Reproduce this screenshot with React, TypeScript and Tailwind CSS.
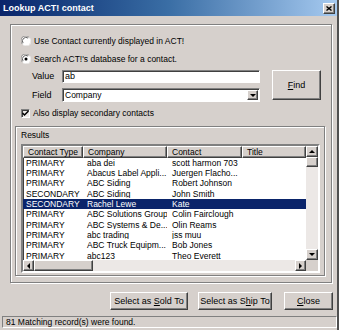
import React from "react";

const BG = "bg-[#d6d0cc]";
const raised =
  "border border-t-white border-l-white border-r-[#404040] border-b-[#404040] shadow-[inset_-1px_-1px_0_#808080] bg-[#d6d0cc]";
const sunken =
  "border border-t-[#808080] border-l-[#808080] border-r-white border-b-white shadow-[inset_1px_1px_0_#404040]";
const etched =
  "border border-[#808080] shadow-[inset_1px_1px_0_#fff,1px_1px_0_#fff]";

const rows: [string, string, string][] = [
  ["PRIMARY", "aba dei", "scott harmon 703"],
  ["PRIMARY", "Abacus Label Appli...", "Juergen Flacho..."],
  ["PRIMARY", "ABC Siding", "Robert Johnson"],
  ["SECONDARY", "ABC Siding", "John Smith"],
  ["SECONDARY", "Rachel Lewe", "Kate"],
  ["PRIMARY", "ABC Solutions Group", "Colin Fairclough"],
  ["PRIMARY", "ABC Systems & De...", "Olin Reams"],
  ["PRIMARY", "abc trading", "jss muu"],
  ["PRIMARY", "ABC Truck Equipm...", "Bob  Jones"],
  ["PRIMARY", "abc123", "Theo Everett"],
];

function Radio({ checked }: { checked?: boolean }) {
  return (
    <svg width="10" height="10" viewBox="0 0 12 12" className="shrink-0">
      <circle cx="6" cy="6" r="5.5" fill="#fff" />
      <path d="M1.5 9.5 A5.5 5.5 0 0 1 9.5 1.5" stroke="#808080" strokeWidth="1" fill="none" />
      <path d="M2.5 8.5 A4.3 4.3 0 0 1 8.5 2.5" stroke="#404040" strokeWidth="1" fill="none" />
      <path d="M10.5 2.5 A5.5 5.5 0 0 1 2.5 10.5" stroke="#f0f0f0" strokeWidth="1" fill="none" />
      {checked && <circle cx="6" cy="6" r="1.8" fill="#000" />}
    </svg>
  );
}

function Arrow({ dir }: { dir: "up" | "down" | "left" | "right" }) {
  const pts = {
    up: "1,5 7,5 4,2",
    down: "1,2 7,2 4,5",
    left: "5,1 5,7 2,4",
    right: "2,1 2,7 5,4",
  }[dir];
  const vert = dir === "up" || dir === "down";
  return (
    <svg width={vert ? 8 : 7} height={vert ? 7 : 8} viewBox={vert ? "0 0 8 7" : "0 0 7 8"}>
      <polygon points={pts} fill="#000" />
    </svg>
  );
}

function ScrollBtn({ dir, className }: { dir: "up" | "down" | "left" | "right"; className: string }) {
  return (
    <div className={`${raised} ${className} flex items-center justify-center shrink-0`}>
      <Arrow dir={dir} />
    </div>
  );
}

export default function App() {
  return (
    <div
      className={`w-[339px] h-[330px] ${BG} overflow-hidden flex flex-col border-r-2 border-r-[#505050] text-[8.5px] leading-none text-black`}
      style={{ fontFamily: '"Liberation Sans", Arial, sans-serif' }}
    >
      {/* Title bar */}
      <div className="h-[16px] shrink-0 flex items-center justify-between bg-gradient-to-r from-[#0a246a] via-[#3a6ea5] to-[#a6caf0]">
        <span className="pl-[3px] text-white font-bold text-[9px]">Lookup ACT! contact</span>
        <div className={`${raised} w-[12px] h-[11px] mr-[2px] flex items-center justify-center`}>
          <svg width="6" height="5" viewBox="0 0 6 5">
            <path d="M0.5 0.5 L5.5 4.5 M5.5 0.5 L0.5 4.5" stroke="#000" strokeWidth="1.4" />
          </svg>
        </div>
      </div>

      {/* Outer group */}
      <div className={`ml-[10px] mt-[8px] w-[322px] h-[259px] shrink-0 ${etched} flex flex-col`}>
        <div className="mt-[9px] h-[14px] flex items-center pl-[10px] gap-[3px]">
          <Radio />
          <span>Use Contact currently displayed in ACT!</span>
        </div>
        <div className="mt-[4px] h-[14px] flex items-center pl-[10px] gap-[3px]">
          <Radio checked />
          <span>Search ACT!'s database for a contact.</span>
        </div>

        <div className="mt-[4px] flex">
          <div className="flex flex-col pl-[21px]">
            <div className="h-[13px] flex items-center">
              <span className="w-[30px] text-[9px]">Value</span>
              <div className={`${sunken} bg-white w-[198px] h-[13px] flex items-center pl-[2px] text-[9px]`}>ab</div>
            </div>
            <div className="mt-[5px] h-[14px] flex items-center">
              <span className="w-[30px] text-[9px]">Field</span>
              <div className={`${sunken} bg-white w-[198px] h-[14px] flex items-center justify-between pl-[2px] pr-[1px]`}>
                <span className="text-[8.5px]">Company</span>
                <ScrollBtn dir="down" className="w-[11px] h-[10px]" />
              </div>
            </div>
          </div>
          <div className={`${raised} ml-[12px] w-[49px] h-[30px] flex items-center justify-center text-[9px]`}>
            <span>
              <span className="underline">F</span>ind
            </span>
          </div>
        </div>

        <div className="mt-[5px] h-[12px] flex items-center pl-[10px] gap-[3px]">
          <div className={`${sunken} bg-[#eeeae8] w-[9px] h-[9px] flex items-center justify-center`}>
            <svg width="7" height="7" viewBox="0 0 7 7">
              <path d="M0.5 3 L2.5 5 L6.5 1" stroke="#000" strokeWidth="1.5" fill="none" />
            </svg>
          </div>
          <span>Also display secondary contacts</span>
        </div>

        {/* Results frame */}
        <div className={`mt-[7px] ml-[4px] w-[310px] h-[150px] ${etched} flex flex-col`}>
          <div className="mt-[3px] h-[10px] pl-[5px] flex items-center">Results</div>
          {/* List view */}
          <div className="mt-[4px] ml-[5px] w-[299px] h-[129px] border-2 border-t-[#808080] border-l-[#808080] border-r-white border-b-white shadow-[inset_1px_1px_0_#404040] bg-white flex flex-col">
            <div className="flex h-[114px]">
              <div className="w-[283px] flex flex-col overflow-hidden">
                <div className="flex h-[12px] shrink-0">
                  {[
                    ["Contact Type", "w-[60px]"],
                    ["Company", "w-[84px]"],
                    ["Contact", "w-[75px]"],
                    ["Title", "w-[64px]"],
                  ].map(([t, w]) => (
                    <div key={t} className={`${raised} ${w} h-[12px] flex items-center pl-[4px] overflow-hidden whitespace-nowrap`}>
                      {t}
                    </div>
                  ))}
                </div>
                <div className="flex flex-col">
                  {rows.map((r, i) => {
                    const sel = i === 4;
                    return (
                      <div
                        key={i}
                        className={`flex h-[10.3px] shrink-0 items-center whitespace-nowrap ${sel ? "bg-[#0a246a] text-white" : ""}`}
                      >
                        <span className="w-[60px] pl-[3px] overflow-hidden">{r[0]}</span>
                        <span className="w-[84px] pl-[4px] overflow-hidden">{r[1]}</span>
                        <span className="w-[75px] pl-[5px] overflow-hidden">{r[2]}</span>
                        <span className="w-[64px]"></span>
                      </div>
                    );
                  })}
                </div>
              </div>
              <div className="w-[12px] flex flex-col">
                <ScrollBtn dir="up" className="w-[12px] h-[11px]" />
                <div className={`${raised} w-[12px] h-[10px]`} />
                <div className="flex-1 bg-[#ece8e6]" />
                <ScrollBtn dir="down" className="w-[12px] h-[11px]" />
              </div>
            </div>
            <div className="flex h-[11px]">
              <ScrollBtn dir="left" className="w-[11px] h-[11px]" />
              <div className={`${raised} w-[59px] h-[11px]`} />
              <div className="w-[202px] bg-[#ece8e6]" />
              <ScrollBtn dir="right" className="w-[11px] h-[11px]" />
              <div className={`w-[12px] ${BG}`} />
            </div>
          </div>
        </div>
      </div>

      {/* Buttons */}
      <div className="mt-[9px] flex pl-[110px] h-[18px] shrink-0 text-[9px]">
        <div className={`${raised} w-[78px] h-[18px] flex items-center justify-center`}>
          <span>
            Select as <span className="underline">S</span>old To
          </span>
        </div>
        <div className={`${raised} ml-[10px] w-[74px] h-[18px] flex items-center justify-center`}>
          <span>
            Select as S<span className="underline">h</span>ip To
          </span>
        </div>
        <div className={`${raised} ml-[12px] w-[49px] h-[18px] flex items-center justify-center`}>
          <span>
            <span className="underline">C</span>lose
          </span>
        </div>
      </div>

      {/* Status bar */}
      <div className="mt-[6px] ml-[2px] w-[335px] h-[12px] shrink-0 border border-t-[#808080] border-l-[#808080] border-r-white border-b-white flex items-center pl-[3px]">
        81 Matching record(s) were found.
      </div>
    </div>
  );
}
